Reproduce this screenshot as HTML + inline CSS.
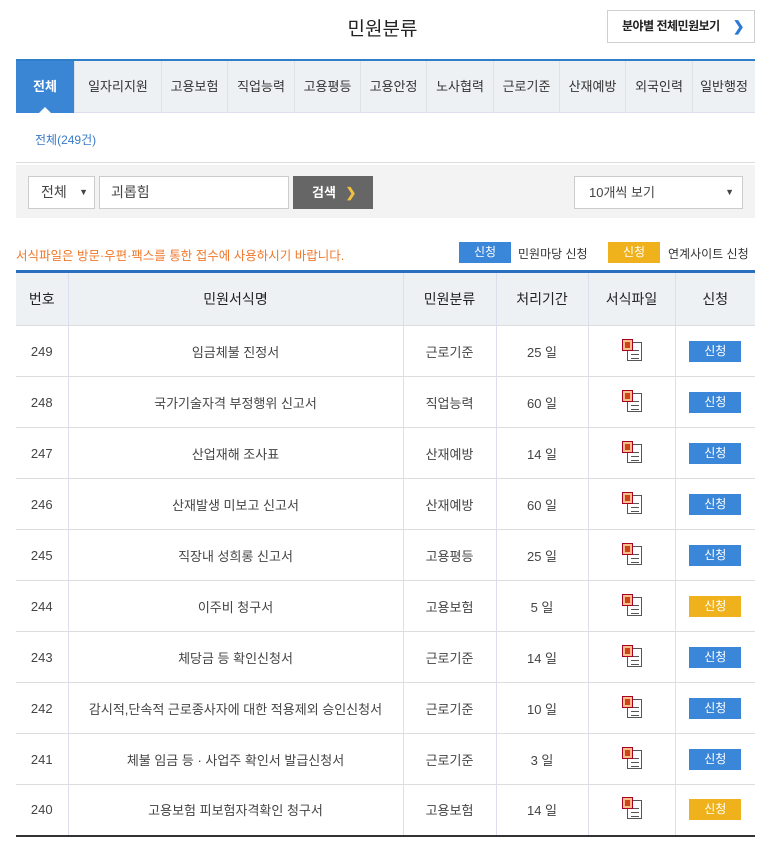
<!DOCTYPE html>
<html><head><meta charset="utf-8"><style>
*{box-sizing:border-box;margin:0;padding:0}
body{width:765px;height:846px;background:#fff;font-family:"Liberation Sans","Noto Sans CJK KR",sans-serif;color:#333;position:relative;overflow:hidden}
.a{position:absolute}
.title{left:0;width:765px;top:14px;text-align:center;font-size:19px;color:#222}
.allbtn{left:607px;top:10px;width:148px;height:33px;border:1px solid #cfcfcf;font-size:12px;color:#222;line-height:31px;padding-left:14px;font-weight:bold;letter-spacing:-0.5px}
.allbtn span{color:#2a7ad6;position:absolute;right:10px;font-size:14px}
.tabs{left:16px;top:59px;width:739px;height:54px;background:#eef1f4;border-top:2px solid #2f7fc8;border-bottom:1px solid #dde}
.tab{position:absolute;top:0;height:52px;line-height:52px;text-align:center;font-size:13px;color:#333;border-right:1px solid #dde2e8}
.tab.on{background:#3a86d4;color:#fff;font-weight:bold}
.cnt{left:35px;top:131px;font-size:12px;color:#3a7bc8}
.hr{left:16px;top:162px;width:739px;height:1px;background:#ddd}
.sbox{left:16px;top:165px;width:739px;height:53px;background:#f3f3f3}
.inp{position:absolute;height:33px;background:#fff;border:1px solid #ccc;font-size:14px;color:#444;line-height:31px}
.note{left:16px;top:245px;font-size:12.5px;color:#f0782c}
.badge{position:absolute;width:52px;height:21px;line-height:21px;text-align:center;color:#fff;font-size:12px}
table{position:absolute;left:16px;top:270px;width:739px;border-collapse:collapse;font-size:13px}
th{height:54px;background:#eef1f4;border-top:3px solid #2a6fbf;font-weight:normal;font-size:14px;color:#222}
td{height:51px;text-align:center;border-top:1px solid #ddd;color:#444}
th,td{border-left:1px solid #dde;}
th:first-child,td:first-child{border-left:none}
tr:last-child td{border-bottom:2px solid #333}
.b{display:inline-block;width:52px;height:21px;line-height:21px;color:#fff;font-size:12px;background:#3a86d8}
.y{background:#f0b21c}
.ic{display:inline-block;position:relative;width:20px;height:22px}
</style></head><body>
<div class="a title">민원분류</div>
<div class="a allbtn">분야별 전체민원보기<span>❯</span></div>
<div class="a tabs">
<div class="tab on" style="left:0;width:59px">전체</div>
<div class="tab" style="left:59px;width:87px">일자리지원</div>
<div class="tab" style="left:146px;width:66px">고용보험</div>
<div class="tab" style="left:212px;width:67px">직업능력</div>
<div class="tab" style="left:279px;width:66px">고용평등</div>
<div class="tab" style="left:345px;width:66px">고용안정</div>
<div class="tab" style="left:411px;width:67px">노사협력</div>
<div class="tab" style="left:478px;width:66px">근로기준</div>
<div class="tab" style="left:544px;width:66px">산재예방</div>
<div class="tab" style="left:610px;width:67px">외국인력</div>
<div class="tab" style="left:677px;width:62px;border-right:none">일반행정</div>
<div style="position:absolute;left:23px;bottom:-1px;width:0;height:0;border:6px solid transparent;border-bottom-color:#fff"></div>
</div>
<div class="a cnt">전체(249건)</div>
<div class="a hr"></div>
<div class="a sbox">
<div class="inp" style="left:12px;top:11px;width:67px;padding-left:12px">전체<span style="position:absolute;right:6px;font-size:9px">▼</span></div>
<div class="inp" style="left:83px;top:11px;width:190px;padding-left:11px">괴롭힘</div>
<div class="inp" style="left:277px;top:11px;width:80px;background:#666;border-color:#666;color:#fff;font-weight:bold;padding-left:18px;font-size:13px">검색 <span style="color:#f0c040;margin-left:6px">❯</span></div>
<div class="inp" style="left:558px;top:11px;width:169px;padding-left:14px;font-size:13px">10개씩 보기<span style="position:absolute;right:8px;font-size:9px">▼</span></div>
</div>
<div class="a note">서식파일은 방문·우편·팩스를 통한 접수에 사용하시기 바랍니다.</div>
<div class="badge" style="left:459px;top:242px;background:#3a86d8">신청</div>
<div class="a" style="left:518px;top:245px;font-size:12px">민원마당 신청</div>
<div class="badge" style="left:608px;top:242px;background:#f0b21c">신청</div>
<div class="a" style="left:668px;top:245px;font-size:12px">연계사이트 신청</div>
<table>
<tr><th style="width:52px;height:52px">번호</th><th style="width:335px;height:52px">민원서식명</th><th style="width:93px">민원분류</th><th style="width:92px">처리기간</th><th style="width:87px">서식파일</th><th>신청</th></tr>
<tr><td>249</td><td>임금체불 진정서</td><td>근로기준</td><td>25 일</td><td><i class="ic"></i></td><td><span class="b">신청</span></td></tr>
<tr><td>248</td><td>국가기술자격 부정행위 신고서</td><td>직업능력</td><td>60 일</td><td><i class="ic"></i></td><td><span class="b">신청</span></td></tr>
<tr><td>247</td><td>산업재해 조사표</td><td>산재예방</td><td>14 일</td><td><i class="ic"></i></td><td><span class="b">신청</span></td></tr>
<tr><td>246</td><td>산재발생 미보고 신고서</td><td>산재예방</td><td>60 일</td><td><i class="ic"></i></td><td><span class="b">신청</span></td></tr>
<tr><td>245</td><td>직장내 성희롱 신고서</td><td>고용평등</td><td>25 일</td><td><i class="ic"></i></td><td><span class="b">신청</span></td></tr>
<tr><td>244</td><td>이주비 청구서</td><td>고용보험</td><td>5 일</td><td><i class="ic"></i></td><td><span class="b y">신청</span></td></tr>
<tr><td>243</td><td>체당금 등 확인신청서</td><td>근로기준</td><td>14 일</td><td><i class="ic"></i></td><td><span class="b">신청</span></td></tr>
<tr><td>242</td><td>감시적,단속적 근로종사자에 대한 적용제외 승인신청서</td><td>근로기준</td><td>10 일</td><td><i class="ic"></i></td><td><span class="b">신청</span></td></tr>
<tr><td>241</td><td>체불 임금 등 · 사업주 확인서 발급신청서</td><td>근로기준</td><td>3 일</td><td><i class="ic"></i></td><td><span class="b">신청</span></td></tr>
<tr><td>240</td><td>고용보험 피보험자격확인 청구서</td><td>고용보험</td><td>14 일</td><td><i class="ic"></i></td><td><span class="b y">신청</span></td></tr>
</table>
<style>
.ic::before{content:"";position:absolute;left:5px;top:3px;width:13px;height:17px;background:#fff;border:1px solid #555;background-image:repeating-linear-gradient(#fff 0 3px,#555 3px 4px);background-size:8px 16px;background-position:3px 4px;background-repeat:no-repeat}
.ic::after{content:"";position:absolute;left:0;top:0;width:9px;height:10px;background:#d0421b;border:1px solid #a02;box-shadow:inset 0 0 0 2px #f5c08a}
</style>
</body></html>
